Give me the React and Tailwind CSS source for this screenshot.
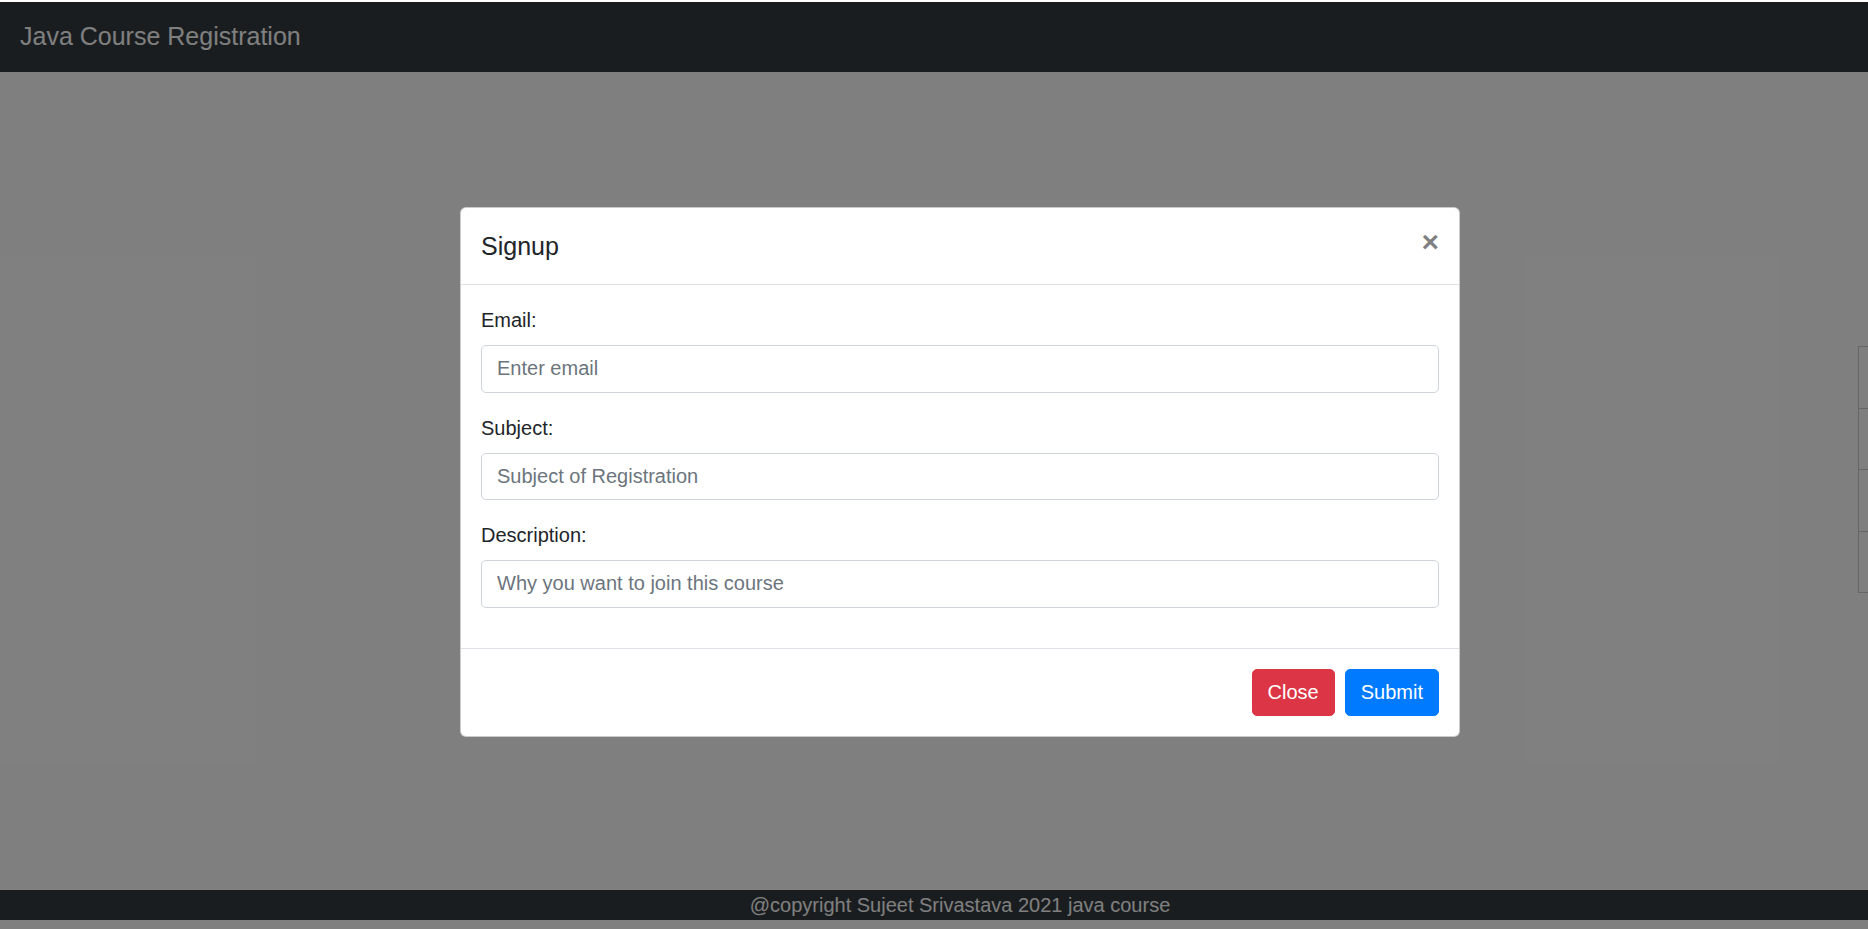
import React from 'react';

const fields = [
  { id: 'email', label: 'Email:', placeholder: 'Enter email', type: 'email' },
  { id: 'subject', label: 'Subject:', placeholder: 'Subject of Registration', type: 'text' },
  { id: 'description', label: 'Description:', placeholder: 'Why you want to join this course', type: 'text' },
];

const App = () => {
  return (
    <div className="w-full h-[929px] overflow-hidden bg-white flex flex-col font-['Liberation_Sans',Arial,sans-serif]">
      {/* thin strip above the page */}
      <div className="h-[2px] bg-white shrink-0" />

      <div className="relative flex-1 w-[1920px]">
        {/* Page underneath the modal */}
        <div className="flex flex-col h-full">
          <nav className="h-[70px] bg-[#343a40] px-[20px] flex items-center shrink-0">
            <a className="text-[25px] leading-[37.5px] text-white">Java Course Registration</a>
          </nav>

          <main className="h-[818px] flex justify-end pt-[274px]">
            <ul className="w-[62px] flex flex-col">
              {[0, 1, 2, 3].map((i) => (
                <li key={i} className="h-[62.5px] border border-[#cccccc] bg-white -mt-px first:mt-0" />
              ))}
            </ul>
          </main>

          <footer className="h-[30px] bg-[#343a40] text-center text-[20px] leading-[30px] text-white">
            @copyright Sujeet Srivastava 2021 java course
          </footer>
        </div>

        {/* Backdrop + dialog */}
        <div className="absolute inset-0 bg-black/50 flex justify-center items-start pt-[205px]">
          <div className="w-[1000px] bg-white border border-black/20 rounded-[6px] flex flex-col text-[#212529]">
            {/* Header */}
            <div className="flex items-start justify-between p-[20px] border-b border-[#dee2e6]">
              <h5 className="text-[25px] leading-[36px] font-normal">Signup</h5>
              <button className="p-[20px] -m-[20px] -mt-[21px] ml-auto text-[30px] leading-none font-bold text-black/50 [text-shadow:0_1px_0_#fff]">
                ×
              </button>
            </div>

            {/* Body */}
            <div className="p-[20px]">
              <form className="flex flex-col gap-[20px] pb-[20px]">
                {fields.map((f) => (
                  <div key={f.id} className="flex flex-col">
                    <label htmlFor={f.id} className="text-[20px] leading-[30px] mb-[10px]">
                      {f.label}
                    </label>
                    <input
                      id={f.id}
                      type={f.type}
                      placeholder={f.placeholder}
                      className="h-[47.5px] px-[15px] py-[7.5px] text-[20px] leading-[30px] border border-[#ced4da] rounded-[5px] bg-white placeholder:text-[#6c757d] outline-none"
                    />
                  </div>
                ))}
              </form>
            </div>

            {/* Footer */}
            <div className="flex items-center justify-end p-[15px] border-t border-[#dee2e6]">
              <button className="m-[5px] px-[15px] py-[7.5px] text-[20px] leading-[30px] text-white bg-[#dc3545] border border-[#dc3545] rounded-[5px]">
                Close
              </button>
              <button className="m-[5px] px-[15px] py-[7.5px] text-[20px] leading-[30px] text-white bg-[#007bff] border border-[#007bff] rounded-[5px]">
                Submit
              </button>
            </div>
          </div>
        </div>
      </div>
    </div>
  );
};

export default App;
